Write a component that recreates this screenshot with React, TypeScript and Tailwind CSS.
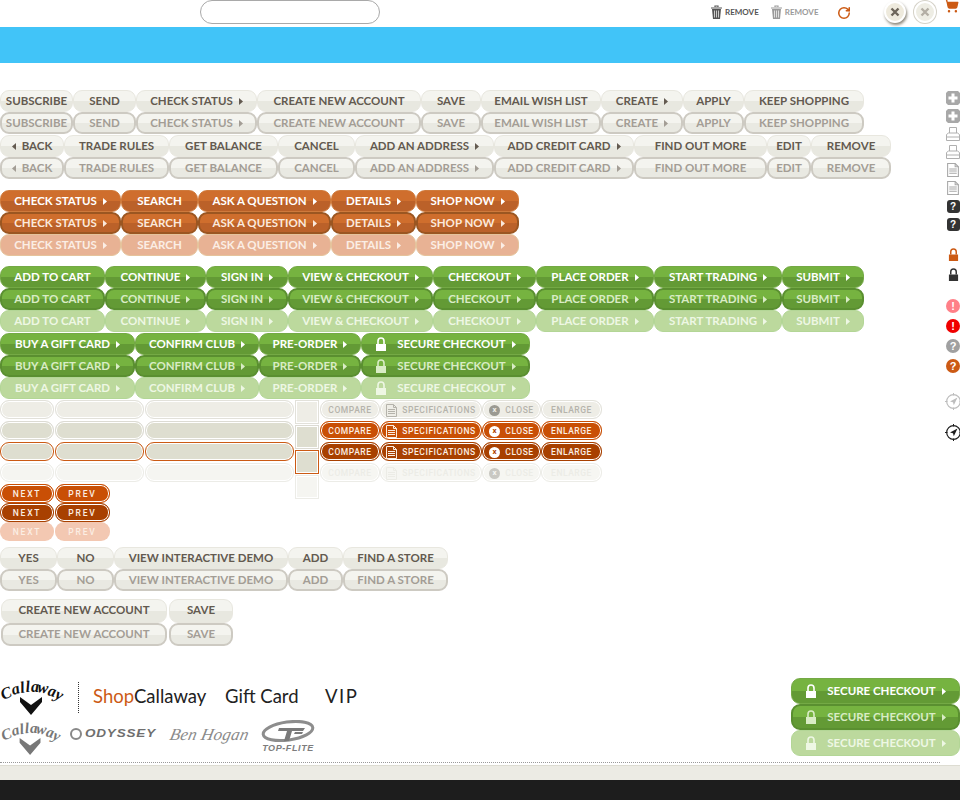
import { RotateCw, ShoppingCart } from "lucide-react";

type Tone = "cream" | "creamOn" | "orange" | "orangeOn" | "orangeOff" | "green" | "greenOn" | "greenOff";

const tones: Record<Tone, string> = {
  cream:
    "text-[#635a50] border border-[#e8e7df] bg-[linear-gradient(#f4f4ef_0%,#f4f4ef_52%,#e8e8e0_52%,#e8e8e0_100%)]",
  creamOn:
    "text-[#a39d95] border-2 border-[#cdcac2] bg-[linear-gradient(#f4f4ef_0%,#f4f4ef_52%,#e9e9e2_52%,#e9e9e2_100%)]",
  orange:
    "text-white border border-[#cf7a3c] bg-[linear-gradient(#cf6e2d_0%,#cf6e2d_52%,#bb6129_52%,#bb6129_100%)]",
  orangeOn:
    "text-[#fbe9dc] border-2 border-[#9b5621] bg-[linear-gradient(#cf6e2d_0%,#cf6e2d_52%,#bb6129_52%,#bb6129_100%)]",
  orangeOff: "text-[#fbeee5] border border-[#e5c39b] bg-[#e8b294]",
  green:
    "text-white border border-[#74a945] bg-[linear-gradient(#76b340_0%,#76b340_52%,#639a35_52%,#639a35_100%)]",
  greenOn:
    "text-[#d9ecc5] border-2 border-[#5a8f30] bg-[linear-gradient(#76b340_0%,#76b340_52%,#639a35_52%,#639a35_100%)]",
  greenOff: "text-[#eef7e4] border border-[#b3d696] bg-[#bcd99d]",
};

function Arrow({ left }: { left?: boolean }) {
  return (
    <svg width="4" height="7" viewBox="0 0 4 7" className="shrink-0">
      <polygon points={left ? "4,0 0,3.5 4,7" : "0,0 4,3.5 0,7"} fill="currentColor" />
    </svg>
  );
}

function Lock({ size = 12 }: { size?: number }) {
  return (
    <svg width={size} height={size + 2} viewBox="0 0 12 14" preserveAspectRatio="none" className="shrink-0">
      <path d="M3 7V4a3 3 0 0 1 6 0v3" fill="none" stroke="currentColor" strokeWidth="1.6" />
      <rect x="1" y="7" width="10" height="7" fill="currentColor" />
    </svg>
  );
}

type Item = { t: string; w: number; arrow?: boolean; back?: boolean; lock?: boolean };

function Btn({ item, tone, h = 22 }: { item: Item; tone: Tone; h?: number }) {
  return (
    <div
      className={`flex shrink-0 items-center justify-center gap-[6px] rounded-[9px] font-['Lato',sans-serif] text-[11.5px] font-bold whitespace-nowrap ${h === 24 || h === 23 ? "pb-[2px]" : ""} ${tones[tone]}`}
      style={{ width: item.w, height: h }}
    >
      {item.back && <Arrow left />}
      {item.lock && <span className="mr-[4px]"><Lock /></span>}
      <span>{item.t}</span>
      {item.arrow && <Arrow />}
    </div>
  );
}

function Row({ items, tone }: { items: Item[]; tone: Tone }) {
  return (
    <div className="flex">
      {items.map((i) => (
        <Btn key={i.t} item={i} tone={tone} />
      ))}
    </div>
  );
}

const row1: Item[] = [
  { t: "SUBSCRIBE", w: 73 },
  { t: "SEND", w: 63 },
  { t: "CHECK STATUS", w: 121, arrow: true },
  { t: "CREATE NEW ACCOUNT", w: 164 },
  { t: "SAVE", w: 60 },
  { t: "EMAIL WISH LIST", w: 120 },
  { t: "CREATE", w: 82, arrow: true },
  { t: "APPLY", w: 61 },
  { t: "KEEP SHOPPING", w: 120 },
];
const row2: Item[] = [
  { t: "BACK", w: 64, back: true },
  { t: "TRADE RULES", w: 105 },
  { t: "GET BALANCE", w: 109 },
  { t: "CANCEL", w: 77 },
  { t: "ADD AN ADDRESS", w: 139, arrow: true },
  { t: "ADD CREDIT CARD", w: 140, arrow: true },
  { t: "FIND OUT MORE", w: 133 },
  { t: "EDIT", w: 44 },
  { t: "REMOVE", w: 80 },
];
const orangeRow: Item[] = [
  { t: "CHECK STATUS", w: 121, arrow: true },
  { t: "SEARCH", w: 77 },
  { t: "ASK A QUESTION", w: 133, arrow: true },
  { t: "DETAILS", w: 85, arrow: true },
  { t: "SHOP NOW", w: 103, arrow: true },
];
const green1: Item[] = [
  { t: "ADD TO CART", w: 105 },
  { t: "CONTINUE", w: 101, arrow: true },
  { t: "SIGN IN", w: 82, arrow: true },
  { t: "VIEW & CHECKOUT", w: 145, arrow: true },
  { t: "CHECKOUT", w: 103, arrow: true },
  { t: "PLACE ORDER", w: 118, arrow: true },
  { t: "START TRADING", w: 128, arrow: true },
  { t: "SUBMIT", w: 82, arrow: true },
];
const green2: Item[] = [
  { t: "BUY A GIFT CARD", w: 135, arrow: true },
  { t: "CONFIRM CLUB", w: 124, arrow: true },
  { t: "PRE-ORDER", w: 102, arrow: true },
  { t: "SECURE CHECKOUT", w: 169, arrow: true, lock: true },
];
const row3: Item[] = [
  { t: "YES", w: 57 },
  { t: "NO", w: 57 },
  { t: "VIEW INTERACTIVE DEMO", w: 174 },
  { t: "ADD", w: 55 },
  { t: "FIND A STORE", w: 105 },
];

const fieldTones = [
  "bg-[#eeede6] border-[#e2e1da]",
  "bg-[#deded0] border-[#dcdbd3]",
  "bg-[#deded0] border-[#cb5a14]",
  "bg-[#f5f5f1] border-[#ecece7]",
];

const smallTones = [
  "bg-[#eeede6] border-[#e2e1da] text-[#b5b3ab]",
  "bg-[#c94f05] border-[#c94f05] text-[#fbeee4]",
  "bg-[#a84000] border-[#a84000] text-[#fbeee4]",
  "bg-[#f6f6f2] border-[#ecece7] text-[#ecece6]",
];

function DocIcon({ className, w = 11, h = 13 }: { className?: string; w?: number; h?: number }) {
  return (
    <svg width={w} height={h} viewBox="0 0 11 13" className={className}>
      <path d="M.5.5h7l3 3v9H.5z" fill="none" stroke="currentColor" />
      <path d="M2 5.500h7M2 7.500h7M2 9.500h7M7.500.5v3h3" fill="none" stroke="currentColor" />
    </svg>
  );
}

function SmallBtn({ w, tone, children, wide }: { w: number; tone: number; children: React.ReactNode; wide?: boolean }) {
  return (
    <div
      className={`flex shrink-0 items-center justify-center gap-[5px] h-[19px] rounded-[9px] border pt-[1px] shadow-[inset_0_0_0_1px_white] font-['Roboto',sans-serif] text-[8.5px] font-medium ${wide ? "tracking-[1.8px]" : "tracking-[0.55px]"} ${smallTones[tone]}`}
      style={{ width: w }}
    >
      {children}
    </div>
  );
}

function CircleX({ tone }: { tone: number }) {
  const c = tone === 0 ? "bg-[#9b9a92] text-[#eeede6]" : tone === 3 ? "bg-[#c9c8c2] text-[#f6f6f2]" : "bg-white text-[#b04400]";
  return (
    <span className={`flex size-[11px] items-center justify-center rounded-full text-[8px] font-bold leading-none ${c}`}>x</span>
  );
}

function FieldRow({ tone }: { tone: number }) {
  const cls = `h-[19px] rounded-[9px] border shadow-[inset_0_0_0_1px_white] ${fieldTones[tone]}`;
  return (
    <div className="flex h-[21px] items-start">
      <div className={`${cls} w-[54px]`} />
      <div className={`${cls} ml-[1px] w-[89px]`} />
      <div className={`${cls} ml-[1px] w-[149px]`} />
      <div className="w-[26px] shrink-0" />
      <SmallBtn w={60} tone={tone}>COMPARE</SmallBtn>
      <SmallBtn w={102} tone={tone}>
        <DocIcon />
        SPECIFICATIONS
      </SmallBtn>
      <SmallBtn w={59} tone={tone}>
        <CircleX tone={tone} />
        CLOSE
      </SmallBtn>
      <SmallBtn w={61} tone={tone}>ENLARGE</SmallBtn>
    </div>
  );
}

function TrashIcon({ className }: { className?: string }) {
  return (
    <svg width="11" height="14" viewBox="0 0 11 14" className={className}>
      <path d="M0 3h11M4 2V1h3v1" fill="none" stroke="currentColor" strokeWidth="1.2" />
      <path d="M1 4h9l-1 10H2z" fill="currentColor" />
      <path d="M3.500 5.500v7M5.500 5.500v7M7.500 5.500v7" stroke="white" strokeWidth=".7" />
    </svg>
  );
}

function CloseCircle({ off }: { off?: boolean }) {
  return (
    <div
      className={`flex size-[22px] items-center justify-center rounded-full border-2 border-white ${off ? "bg-[#eeede4] text-[#b3aea4] ring-1 ring-[#d5d2c8]" : "bg-[#eeeadd] text-[#6d655a] shadow-[1px_2px_3px_#8a8578]"}`}
    >
      <svg width="10" height="10" viewBox="0 0 10 10">
        <path d="M1.500 1.500l7 7M8.500 1.500l-7 7" stroke="currentColor" strokeWidth="2.4" />
      </svg>
    </div>
  );
}

function PlusBox() {
  return (
    <svg width="14" height="14" viewBox="0 0 14 14">
      <path d="M2 0h10l2 2v10l-2 2H2l-2-2V2z" fill="#a8a8a8" />
      <path d="M5.500 2.500h3v3h3v3h-3v3h-3v-3h-3v-3h3z" fill="white" />
    </svg>
  );
}
function PrintIcon() {
  return (
    <svg width="14" height="14" viewBox="0 0 14 14" fill="none" stroke="#b0b0b0">
      <path d="M3.500 6V.5h7V6M.5 13.500v-6l2-1.500h9l2 1.500v6zM.5 10h13" />
    </svg>
  );
}
function SideDoc() {
  return <DocIcon w={12} h={14} className="text-[#a8a8a8]" />;
}
function HelpBox() {
  return (
    <div className="flex size-[13px] items-center justify-center rounded-[3px] bg-[#333] font-['Liberation_Sans',sans-serif] text-[10px] font-bold text-white">?</div>
  );
}
function Dot({ cls, t }: { cls: string; t: string }) {
  return (
    <div className={`flex size-[14px] items-center justify-center rounded-full font-['Liberation_Sans',sans-serif] text-[11px] font-bold text-white ${cls}`}>{t}</div>
  );
}
function Compass({ color }: { color: string }) {
  return (
    <svg width="17" height="17" viewBox="0 0 17 17" fill="none" stroke={color} className="shrink-0">
      <circle cx="8.500" cy="8.500" r="6.800" strokeWidth="1.200" />
      <path d="M8.500 0v2.500M8.500 14.500V17M0 8.500h2.500M14.500 8.500H17" />
      <path d="M12.500 4.500L5 8.500l3 .8.800 3z" fill={color} stroke="none" />
    </svg>
  );
}

// arched wordmark: one text run, each glyph placed and turned along the arc
function Logo({ color, w, h }: { color: string; w: number; h: number }) {
  return (
    <svg width={w} height={h} viewBox="0 0 64 38" className="shrink-0 overflow-visible">
      <text
        x="3 13 21 26 31 37 47 54"
        y="22 17 15 14 13.500 14 17 20"
        rotate="-22 -16 -10 -5 0 8 16 24"
        fontFamily="Liberation Serif, serif"
        fontStyle="italic"
        fontWeight="700"
        fontSize="16"
        fill={color}
      >
        Callaway
      </text>
      <polygon points="20,19 31,27 42,19 42,24 31,37 20,24" fill={color} />
    </svg>
  );
}

function TopFlite() {
  return (
    <div className="flex w-[56px] flex-col items-center">
      <svg width="54" height="23" viewBox="0 0 54 23">
        <ellipse cx="27" cy="11" rx="25" ry="9" fill="none" stroke="#8d8d8d" strokeWidth="3" transform="rotate(-8 27 11)" />
        <path d="M18 8h26l-2 3H31l-3 10h-5l3-10h-9zM34 12h8l-1 2h-8z" fill="#7a7a7a" />
      </svg>
      <span className="font-['Liberation_Sans',sans-serif] text-[9px] leading-[10px] font-bold italic tracking-[0.6px] text-[#7d7d7d]">TOP-FLITE</span>
    </div>
  );
}

export default function App() {
  return (
    <div className="relative h-[800px] w-[960px] overflow-hidden bg-white font-['Lato',sans-serif]">
      <header className="flex h-[27px] items-start">
        <div className="ml-[200px] h-[24px] w-[180px] rounded-[12px] border border-[#a9a9a9] bg-white" />
        <div className="ml-[331px] flex items-center gap-[3px] pt-[5px] text-[#555]">
          <TrashIcon />
          <span className="text-[8px] font-bold">REMOVE</span>
        </div>
        <div className="ml-[12px] flex items-center gap-[3px] pt-[5px] text-[#9a9a9a]">
          <TrashIcon />
          <span className="text-[8px] font-bold">REMOVE</span>
        </div>
        <RotateCw className="ml-[18px] mt-[6px] size-[14px] text-[#cc5a14]" strokeWidth={2.6} />
        <div className="ml-[33px] mt-[1px]"><CloseCircle /></div>
        <div className="ml-[8px] mt-[1px]"><CloseCircle off /></div>
        <ShoppingCart className="-mt-[2px] ml-[8px] size-[15px] text-[#cc5a14]" fill="#cc5a14" />
      </header>
      <div className="h-[36px] bg-[#41c4f8]" />

      <div className="flex">
        <main className="w-[930px] shrink-0 pt-[27px]">
          <Row items={row1} tone="cream" />
          <Row items={row1} tone="creamOn" />
          <div className="mt-[1px]"><Row items={row2} tone="cream" /></div>
          <Row items={row2} tone="creamOn" />

          <div className="mt-[11px]"><Row items={orangeRow} tone="orange" /></div>
          <Row items={orangeRow} tone="orangeOn" />
          <Row items={orangeRow} tone="orangeOff" />

          <div className="mt-[10px]"><Row items={green1} tone="green" /></div>
          <Row items={green1} tone="greenOn" />
          <Row items={green1} tone="greenOff" />
          <div className="mt-[1px]"><Row items={green2} tone="green" /></div>
          <Row items={green2} tone="greenOn" />
          <Row items={green2} tone="greenOff" />

          <div className="relative mt-[1px] h-[84px]">
            {[0, 1, 2, 3].map((t) => (
              <FieldRow key={t} tone={t} />
            ))}
            <div className="absolute left-[295px] top-0 flex flex-col gap-[1px]">
              {[0, 1, 2, 3].map((t) => (
                <div key={t} className={`size-[24px] border shadow-[inset_0_0_0_1px_white] ${fieldTones[t]}`} />
              ))}
            </div>
          </div>

          <div className="flex gap-[1px]">
            <SmallBtn w={54} tone={1} wide>NEXT</SmallBtn>
            <SmallBtn w={55} tone={1} wide>PREV</SmallBtn>
          </div>
          <div className="flex gap-[1px]">
            <SmallBtn w={54} tone={2} wide>NEXT</SmallBtn>
            <SmallBtn w={55} tone={2} wide>PREV</SmallBtn>
          </div>
          <div className="flex gap-[1px]">
            <div className="flex h-[19px] w-[54px] items-center justify-center rounded-[9px] bg-[#f3c8b2] pt-[1px] font-['Roboto',sans-serif] text-[8.5px] font-medium tracking-[1.8px] text-[#fbeee4]">NEXT</div>
            <div className="flex h-[19px] w-[55px] items-center justify-center rounded-[9px] bg-[#f3c8b2] pt-[1px] font-['Roboto',sans-serif] text-[8.5px] font-medium tracking-[1.8px] text-[#fbeee4]">PREV</div>
          </div>

          <div className="mt-[6px]"><Row items={row3} tone="cream" /></div>
          <Row items={row3} tone="creamOn" />

          <div className="ml-[1px] mt-[8px] flex gap-[2px]">
            <Btn item={{ t: "CREATE NEW ACCOUNT", w: 166 }} tone="cream" h={24} />
            <Btn item={{ t: "SAVE", w: 64 }} tone="cream" h={24} />
          </div>
          <div className="ml-[1px] flex gap-[2px]">
            <Btn item={{ t: "CREATE NEW ACCOUNT", w: 166 }} tone="creamOn" h={23} />
            <Btn item={{ t: "SAVE", w: 64 }} tone="creamOn" h={23} />
          </div>
        </main>

        <aside className="flex w-[30px] flex-col items-center pl-[16px] pt-[26px]">
          {[<PlusBox />, <PlusBox />, <PrintIcon />, <PrintIcon />, <SideDoc />, <SideDoc />, <HelpBox />, <HelpBox />].map((icon, i) => (
            <div key={i} className="flex h-[18px] items-center justify-center">{icon}</div>
          ))}
          <div className="mt-[11px] flex h-[20px] items-center text-[#cc5a14]"><Lock size={11} /></div>
          <div className="flex h-[20px] items-center text-[#333]"><Lock size={11} /></div>
          <div className="mt-[12px] flex h-[20px] items-center"><Dot cls="bg-[#ff8088]" t="!" /></div>
          <div className="flex h-[20px] items-center"><Dot cls="bg-[#f00000]" t="!" /></div>
          <div className="flex h-[20px] items-center"><Dot cls="bg-[#a0a0a0]" t="?" /></div>
          <div className="flex h-[20px] items-center"><Dot cls="bg-[#cc5a14]" t="?" /></div>
          <div className="mt-[15px] flex h-[20px] items-center"><Compass color="#bdbdbd" /></div>
          <div className="mt-[11px] flex h-[20px] items-center"><Compass color="#1d1d1d" /></div>
        </aside>
      </div>

      <footer className="mt-[32px]">
        <div className="flex h-[81px] items-start">
          <div className="w-[791px] shrink-0">
            <div className="flex h-[42px] items-start">
              <Logo color="#111" w={64} h={38} />
              <div className="ml-[14px] mt-[4px] h-[31px] border-l border-dotted border-[#333]" />
              <div className="ml-[14px] mt-[5px] flex font-['Lato',sans-serif] text-[18.5px] text-[#222]">
                <span className="w-[132px]"><span className="text-[#cc5a14]">Shop</span>Callaway</span>
                <span className="w-[100px]">Gift Card</span>
                <span className="tracking-[1.5px]">VIP</span>
              </div>
            </div>
            <div className="flex items-start">
              <Logo color="#777" w={62} h={36} />
              <div className="ml-[8px] mt-[6px] flex items-center gap-[3px] text-[#6f6f6f]">
                <span className="size-[12px] shrink-0 rounded-full border-2 border-double border-[#888]" />
                <span className="w-[77px] origin-left scale-x-[1.35] whitespace-nowrap font-['Liberation_Sans',sans-serif] text-[10px] font-bold italic tracking-[0.6px]">ODYSSEY</span>
              </div>
              <span className="ml-[8px] mt-[2px] w-[84px] -skew-x-12 font-['Liberation_Serif',serif] text-[17px] italic tracking-[0.2px] text-[#8a8a8a]">Ben Hogan</span>
              <div className="ml-[6px]"><TopFlite /></div>
            </div>
          </div>
          <div className="flex w-[169px] flex-col">
            <Btn item={{ t: "SECURE CHECKOUT", w: 169, arrow: true, lock: true }} tone="green" h={26} />
            <Btn item={{ t: "SECURE CHECKOUT", w: 169, arrow: true, lock: true }} tone="greenOn" h={26} />
            <Btn item={{ t: "SECURE CHECKOUT", w: 169, arrow: true, lock: true }} tone="greenOff" h={26} />
          </div>
        </div>
        <div className="mt-[3px] w-[940px] border-t border-dotted border-[#999]" />
        <div className="mt-[2px] h-[15px] border-t border-[#dddcd2] bg-[#ecebe4]" />
        <div className="h-[20px] bg-[#1d1d1d]" />
      </footer>
    </div>
  );
}
